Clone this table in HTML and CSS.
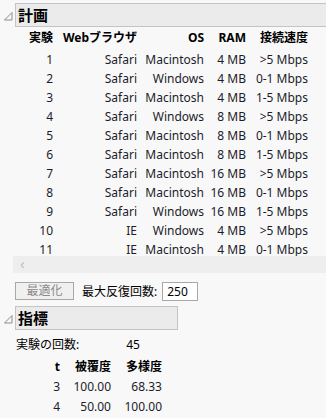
FILE: index.html
```html
<!DOCTYPE html>
<html lang="ja">
<head>
    <meta charset="UTF-8">
    <meta name="viewport" content="width=device-width, initial-scale=1.0">
    <title>計画</title>
    <link rel="stylesheet" href="styles.css">
</head>
<body>
    <div class="panel">
        <div class="outline">
            <svg class="toggle" width="9" height="9" viewBox="0 0 9 9"><path d="M8 0.5 L8 8 L0.5 8 Z" fill="none" stroke="#8c8c8c" stroke-width="1"/></svg>
            <div class="outline-title">計画</div>
        </div>

        <div class="design">
            <div class="grid head">
                <span>実験</span>
                <span>Webブラウザ</span>
                <span>OS</span>
                <span>RAM</span>
                <span>接続速度</span>
            </div>
            <div id="rows"></div>
        </div>

        <div class="hscroll"><span class="arrow">&lsaquo;</span></div>

        <div class="controls">
            <button class="opt-button" disabled>最適化</button>
            <span class="label">最大反復回数:</span>
            <span class="num-box">250</span>
        </div>

        <div class="outline small">
            <svg class="toggle" width="9" height="9" viewBox="0 0 9 9"><path d="M8 0.5 L8 8 L0.5 8 Z" fill="none" stroke="#8c8c8c" stroke-width="1"/></svg>
            <div class="outline-title">指標</div>
        </div>

        <div class="metrics">
            <div class="count">
                <span>実験の回数:</span>
                <span class="count-value">45</span>
            </div>
            <div class="grid2 head">
                <span>t</span>
                <span>被覆度</span>
                <span>多様度</span>
            </div>
            <div class="grid2">
                <span>3</span>
                <span>100.00</span>
                <span>68.33</span>
            </div>
            <div class="grid2">
                <span>4</span>
                <span>50.00</span>
                <span>100.00</span>
            </div>
        </div>
    </div>

    <script>
        const runs = [
            [1, "Safari", "Macintosh", "4 MB", ">5 Mbps"],
            [2, "Safari", "Windows", "4 MB", "0-1 Mbps"],
            [3, "Safari", "Macintosh", "4 MB", "1-5 Mbps"],
            [4, "Safari", "Windows", "8 MB", ">5 Mbps"],
            [5, "Safari", "Macintosh", "8 MB", "0-1 Mbps"],
            [6, "Safari", "Macintosh", "8 MB", "1-5 Mbps"],
            [7, "Safari", "Macintosh", "16 MB", ">5 Mbps"],
            [8, "Safari", "Macintosh", "16 MB", "0-1 Mbps"],
            [9, "Safari", "Windows", "16 MB", "1-5 Mbps"],
            [10, "IE", "Windows", "4 MB", ">5 Mbps"],
            [11, "IE", "Macintosh", "4 MB", "0-1 Mbps"]
        ];

        const rows = document.getElementById('rows');
        runs.forEach(run => {
            const row = document.createElement('div');
            row.className = 'grid';
            run.forEach(value => {
                const cell = document.createElement('span');
                cell.textContent = value;
                row.appendChild(cell);
            });
            rows.appendChild(row);
        });
    </script>
</body>
</html>
```

FILE: styles.css
```css
body {
    margin: 0;
    padding: 0;
    background: #f8f8f8;
    font-family: "Noto Sans", "Noto Sans CJK JP", sans-serif;
    font-size: 12px;
    color: #1c1c2c;
    overflow: hidden;
}
.panel {
    padding-top: 3px;
}
.outline {
    display: flex;
    align-items: flex-end;
    height: 24px;
}
.toggle {
    margin: 0 2px 6px 4px;
}
.outline-title {
    flex: 1;
    height: 22px;
    margin-right: -10px;
    padding-left: 2px;
    background: #ebebeb;
    border: 1px solid #c4c4c4;
    font-size: 15px;
    font-weight: bold;
    color: #000;
    line-height: 22px;
}
.outline.small {
    margin-top: 4px;
}
.outline.small .outline-title {
    flex: none;
    width: 159px;
    margin-right: 0;
}
.design {
    padding-top: 1px;
}
.grid {
    display: grid;
    grid-template-columns: 53px 84px 67px 42px 62px;
    height: 19px;
    line-height: 19px;
    text-align: right;
    white-space: nowrap;
}
.grid.head {
    font-weight: bold;
    color: #000;
    margin-bottom: 3px;
}
.hscroll {
    position: relative;
    margin: -3px 0 0 13px;
    height: 17px;
    background: #eeeeee;
    color: #c0c0c0;
    font-size: 15px;
    line-height: 15px;
}
.arrow {
    padding-left: 7px;
}
.controls {
    display: flex;
    align-items: center;
    margin: 7px 0 0 15px;
    height: 22px;
}
.opt-button {
    width: 59px;
    height: 18px;
    padding: 0;
    background: #f0f0f0;
    border: 1px solid #a8a8a8;
    color: #8a8a8a;
    font-family: inherit;
    font-size: 12px;
    line-height: 16px;
}
.label {
    margin-left: 8px;
    color: #000;
}
.num-box {
    margin-left: 5px;
    width: 30px;
    height: 17px;
    padding-left: 4px;
    background: #fff;
    border: 1px solid #a8a8a8;
    line-height: 17px;
    color: #000;
}
.metrics {
    padding-top: 5px;
}
.count {
    display: flex;
    height: 19px;
    line-height: 19px;
    padding-left: 16px;
    color: #000;
}
.count-value {
    margin-left: 47px;
}
.grid2 {
    display: grid;
    grid-template-columns: 60px 51px 51px;
    height: 20px;
    line-height: 20px;
    text-align: right;
}
.grid2.head {
    font-weight: bold;
    color: #000;
    margin-top: 3px;
}
```
